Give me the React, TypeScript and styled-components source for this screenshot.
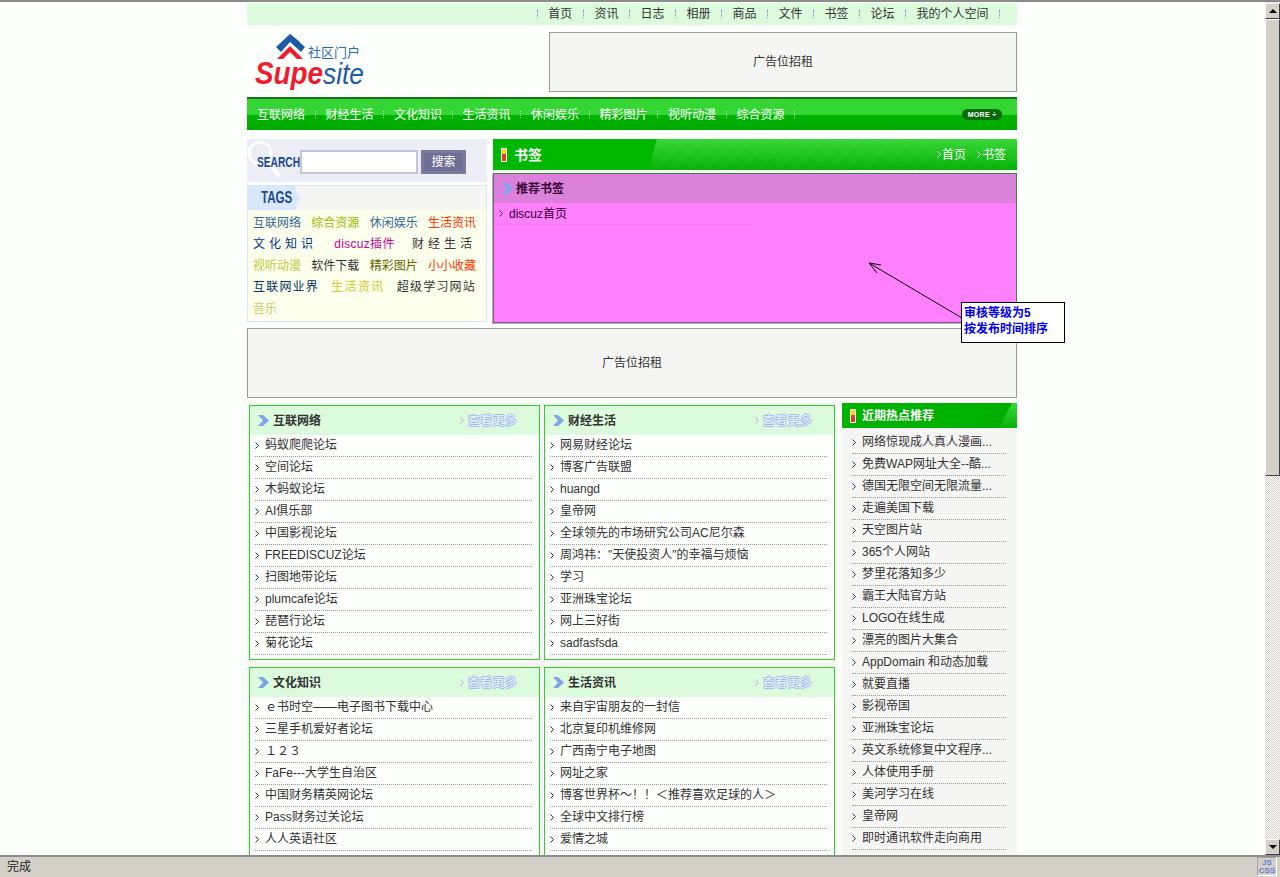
import React from "react";
import styled, { createGlobalStyle } from "styled-components";

const Global = createGlobalStyle`
  html, body { margin: 0; padding: 0; height: 100%; overflow: hidden; background: #fff; }
  #root { height: 100%; }
  * { box-sizing: border-box; }
  body { font: 12px/16px "Liberation Sans", "Noto Sans CJK SC", sans-serif; color: #333; }
`;

const Frame = styled.div`
  height: 877px; display: flex; flex-direction: column; background: #fdfffd;
`;
const Work = styled.div`
  height: 855px; display: flex; border-top: 2px solid #8c8c8c; overflow: hidden;
`;
const LeftEdge = styled.div`
  width: 2px; flex: none; background: #fdfffd;
`;
const Viewport = styled.div`
  width: 1263px; flex: none; padding: 1px 0 0 245px; overflow: hidden;
`;
const Page = styled.div`
  width: 770px;
`;

const TopBar = styled.div`
  height: 22px; background: #dcfadc; display: flex; justify-content: flex-end; align-items: center; padding-right: 17px;
`;
const TopItem = styled.span`
  color: #333; padding: 0 10.5px;
`;
const TopSep = styled.i`
  width: 1px; height: 8px; border-left: 1px dotted #6a8ccc; display: block;
`;

const Header = styled.div`
  height: 72px; display: flex; justify-content: space-between; padding: 7px 0 0 8px;
`;
const AdBox = styled.div<{ $w: string; $h: number }>`
  width: ${(p) => p.$w}; height: ${(p) => p.$h}px; background: #f5f6f4; border: 1px solid #999;
  display: flex; align-items: center; justify-content: center; color: #333;
`;
const LogoSvg = styled.svg`
  display: block; width: 110px; height: 56px; margin-top: 2px;
`;

const Nav = styled.div`
  height: 33px; border-top: 2px solid #1a701a; padding-left: 0;
  background: linear-gradient(#34d634 0, #34d634 16px, #00b400 16px, #00a900 31px);
  display: flex; align-items: center; position: relative;
`;
const NavItem = styled.span`
  color: #fff; padding: 0 9.5px 0 10px;
`;
const NavSep = styled.i`
  width: 1px; height: 7px; border-left: 1px dotted #d8f8d8; display: block;
`;
const MoreBadge = styled.span`
  margin-left: auto; margin-right: 15px; width: 40px; height: 11px; border-radius: 6px; background: #076c07;
  color: #fff; font: bold 7px/11px "Liberation Sans", sans-serif; text-align: center; letter-spacing: 0.3px;
`;

const MainRow = styled.div`
  display: flex; gap: 6px; margin-top: 9px;
`;
const Side = styled.div`
  width: 240px; display: flex; flex-direction: column; gap: 3px;
`;
const SearchBar = styled.div`
  height: 43px; background: #ecedf5; display: flex; align-items: center; padding: 3px 0 0 10px; position: relative; overflow: hidden;
`;
const Lens = styled.svg`
  position: absolute; left: 0; top: 0; width: 36px; height: 42px;
`;
const Slab = styled.span<{ $size: number; $w: number }>`
  position: relative; display: block; width: ${(p) => p.$w}px; color: #1c4a8e; font-weight: bold; font-size: ${(p) => p.$size}px;
  transform: scaleX(0.68); transform-origin: left center; white-space: nowrap;
`;
const SearchInput = styled.input`
  width: 118px; height: 24px; margin-left: 8px; border: 2px solid #c4c4de; background: #fff; padding: 0; outline: none;
`;
const SearchBtn = styled.button`
  width: 45px; height: 24px; margin-left: 3px; border: 3px solid #7a7a9c; background: #6f6f96; color: #fff; padding: 0;
  font: 12px/16px "Liberation Sans", "Noto Sans CJK SC", sans-serif;
`;
const TagsBox = styled.div`
  height: 137px; border: 1px solid #d8e6f8; background: #fbffec;
`;
const TagsHead = styled.div`
  height: 24px; background: #f5f6f4; display: flex;
`;
const TagsTab = styled.div`
  width: 48px; height: 24px; background: #d8e8fc; padding: 0 0 0 13px; display: flex; align-items: center;
`;
const TagsTip = styled.i`
  display: block; width: 0; height: 0; margin-top: 6px; border-left: 5px solid #d8e8fc; border-top: 6px solid transparent; border-bottom: 6px solid transparent;
`;
const TagsBody = styled.div`
  padding: 2px 10px 0 5px;
`;
const TagRow = styled.div<{ $start?: boolean }>`
  height: 21.5px; display: flex; align-items: center; justify-content: ${(p) => (p.$start ? "flex-start" : "space-between")}; white-space: nowrap;
`;
const Tag = styled.span<{ $c: string; $ls?: number }>`
  color: ${(p) => p.$c}; letter-spacing: ${(p) => p.$ls ?? 0}px;
`;

const Main = styled.div`
  width: 524px; display: flex; flex-direction: column; gap: 3px;
`;
const GreenHead = styled.div`
  height: 31px; display: flex; align-items: center; padding: 0 11px 0 8px; color: #fff;
  background:
    linear-gradient(105deg, #00b800 0, #00b800 158px, rgba(0,184,0,0) 158.5px),
    repeating-linear-gradient(-45deg, rgba(255,255,255,0.07) 0 1px, rgba(255,255,255,0) 1px 3px),
    linear-gradient(#35d635, #00b000);
`;
const Flag = styled.i`
  display: block; width: 6px; height: 14px; border: 1px solid #fff; flex: none;
  background: linear-gradient(#f4d820 0, #f4d820 40%, #e23a2a 40%);
`;
const HeadTitle = styled.span`
  font-weight: bold; font-size: 14px; margin-left: 7px;
`;
const HeadLinks = styled.div`
  margin-left: auto; display: flex; gap: 11px;
`;
const HeadLink = styled.span`
  color: #fff; display: flex; align-items: center; gap: 1px;
`;
const PinkBox = styled.div`
  height: 150px; background: #ff80ff; border: 1px solid #338c33; border-bottom-width: 1px; position: relative; box-shadow: -1px 1px 0 #ff80ff;
`;
const PinkHead = styled.div`
  height: 29px; background: #db80db; display: flex; align-items: center; padding-left: 8px;
`;
const PinkTitle = styled.b`
  color: #330033; margin-left: 3px;
`;
const PinkRow = styled.div`
  height: 22px; width: 262px; border-bottom: 1px solid #f57cf5; display: flex; align-items: center; padding-left: 5px; color: #300030; gap: 6px;
`;
const ArrowSvg = styled.svg`
  position: absolute; left: 373px; top: 88px; width: 96px; height: 60px;
`;
const Note = styled.div`
  position: absolute; left: 467px; top: 128px; width: 104px; height: 41px; background: #fff; border: 1px solid #000; z-index: 2;
  color: #0000f0; font-weight: bold; padding: 2px 2px; line-height: 16px; white-space: nowrap;
`;

const Grid = styled.div`
  display: flex; margin-top: 5px; align-items: flex-start;
`;
const LeftGrid = styled.div`
  width: 590px; padding: 2px; background: #f5f6f4; display: grid; grid-template-columns: 291px 291px; gap: 7px 4px;
`;
const Card = styled.div`
  border: 1px solid #33cc33; background: #fdfffd; min-height: 255px; padding-bottom: 4px;
`;
const CardHead = styled.div`
  height: 29px; background: #dcfadc; display: flex; align-items: center; padding: 0 22px 0 8px;
`;
const CardTitle = styled.b`
  color: #333; margin-left: 4px;
`;
const MoreLink = styled.span`
  margin-left: auto; display: flex; align-items: center; gap: 4px; color: #f0f6ff; letter-spacing: 0.3px;
  text-shadow: 1px 0 0 #96b8f4, -1px 0 0 #96b8f4, 0 1px 0 #96b8f4, 0 -1px 0 #96b8f4;
`;
const List = styled.ul<{ $pad?: number }>`
  list-style: none; margin: 0; padding: ${(p) => p.$pad ?? 0}px 0 0;
`;
const Row = styled.li<{ $side?: boolean }>`
  height: 22px; display: flex; align-items: center; gap: 6px; white-space: nowrap; color: #333;
  margin: ${(p) => (p.$side ? "0 11px 0 10px" : "0 7px 0 5px")};
  border-bottom: 1px dotted #999; padding-bottom: 1px;
`;
const RightCol = styled.div`
  width: 175px; margin-left: 5px; background: #f5f5f3; min-height: 460px;
`;
const SideHead = styled.div`
  height: 25px; display: flex; align-items: center; padding-left: 8px; color: #fff;
  background:
    linear-gradient(118deg, #00b400 0, #00b000 150px, rgba(0,176,0,0) 150.5px),
    repeating-linear-gradient(-45deg, rgba(255,255,255,0.07) 0 1px, rgba(255,255,255,0) 1px 3px),
    linear-gradient(#35d635, #00b000);
`;
const SideTitle = styled.b`
  margin-left: 6px;
`;

const Status = styled.div`
  height: 22px; background: #d4d0c8; border-top: 2px solid #8c8c8c; display: flex; align-items: center; padding: 0 3px 1px 7px; color: #222;
`;
const GripPanel = styled.div`
  margin-left: auto; width: 20px; height: 19px; border: 1px solid #fff; border-color: #a8a49c #fff #fff #a8a49c; display: flex; flex-direction: column; align-items: center; justify-content: center;
  font: bold 8px/8px "Liberation Sans", sans-serif; color: #5c84dc;
`;
const StatusText = styled.span`
  flex: 1; 
`;

const Scrollbar = styled.div`
  width: 15px; flex: none; display: flex; flex-direction: column; padding-top: 1px;
  background: repeating-conic-gradient(#d4d0c8 0 25%, #fff 0 50%) 0 0 / 2px 2px;
`;
const ScrollBtn = styled.div`
  height: 16px; flex: none; background: #d4d0c8; border: 1px solid; border-color: #fff #404040 #404040 #fff;
  display: flex; align-items: center; justify-content: center;
`;
const Thumb = styled.div`
  height: 457px; flex: none; background: #d4d0c8; border: 1px solid; border-color: #fff #404040 #404040 #fff;
`;
const Spacer = styled.div`
  flex: 1;
`;
const Tri = styled.i<{ $up?: boolean }>`
  display: block; width: 0; height: 0; border-left: 4px solid transparent; border-right: 4px solid transparent;
  ${(p) => (p.$up ? "border-bottom: 4px solid #000;" : "border-top: 4px solid #000;")}
`;

const Bullet = ({ c = "#333" }: { c?: string }) => (
  <svg width="4" height="7" viewBox="0 0 4 7" style={{ flex: "none" }}>
    <path d="M0.5 0.5 L3.5 3.5 L0.5 6.5" fill="none" stroke={c} strokeWidth="1" />
  </svg>
);
const Chevron = () => (
  <svg width="11" height="11" viewBox="0 0 11 11" style={{ flex: "none" }}>
    <polygon points="0,0 5,0 11,5.5 5,11 0,11 5,5.5" fill="#7fa4ea" />
  </svg>
);

const topNav = ["首页", "资讯", "日志", "相册", "商品", "文件", "书签", "论坛", "我的个人空间"];
const mainNav = ["互联网络", "财经生活", "文化知识", "生活资讯", "休闲娱乐", "精彩图片", "视听动漫", "综合资源"];

const tags: { t: string; c: string; ls?: number }[][] = [
  [{ t: "互联网络", c: "#336699" }, { t: "综合资源", c: "#99bb00" }, { t: "休闲娱乐", c: "#336699" }, { t: "生活资讯", c: "#ff3300" }],
  [{ t: "文化知识", c: "#003399", ls: 4 }, { t: "discuz插件", c: "#cc0099", ls: 0.3 }, { t: "财经生活", c: "#333333", ls: 4 }],
  [{ t: "视听动漫", c: "#c6c63a" }, { t: "软件下载", c: "#333333" }, { t: "精彩图片", c: "#666600" }, { t: "小小收藏", c: "#ff3300" }],
  [{ t: "互联网业界", c: "#003366", ls: 1.2 }, { t: "生活资讯", c: "#cccc33", ls: 1.3 }, { t: "超级学习网站", c: "#333333", ls: 1.2 }],
];

const cards: { title: string; items: string[] }[] = [
  { title: "互联网络", items: ["蚂蚁爬爬论坛", "空间论坛", "木蚂蚁论坛", "AI俱乐部", "中国影视论坛", "FREEDISCUZ论坛", "扫图地带论坛", "plumcafe论坛", "琵琶行论坛", "菊花论坛"] },
  { title: "财经生活", items: ["网易财经论坛", "博客广告联盟", "huangd", "皇帝网", "全球领先的市场研究公司AC尼尔森", "周鸿祎：\"天使投资人\"的幸福与烦恼", "学习", "亚洲珠宝论坛", "网上三好街", "sadfasfsda"] },
  { title: "文化知识", items: ["ｅ书时空——电子图书下载中心", "三星手机爱好者论坛", "１２３", "FaFe---大学生自治区", "中国财务精英网论坛", "Pass财务过关论坛", "人人英语社区"] },
  { title: "生活资讯", items: ["来自宇宙朋友的一封信", "北京复印机维修网", "广西南宁电子地图", "网址之家", "博客世界杯～！！＜推荐喜欢足球的人＞", "全球中文排行榜", "爱情之城"] },
];

const hot = ["网络惊现成人真人漫画...", "免费WAP网址大全--酷...", "德国无限空间无限流量...", "走遍美国下载", "天空图片站", "365个人网站", "梦里花落知多少", "霸王大陆官方站", "LOGO在线生成", "漂亮的图片大集合", "AppDomain 和动态加载", "就要直播", "影视帝国", "亚洲珠宝论坛", "英文系统修复中文程序...", "人体使用手册", "美河学习在线", "皇帝网", "即时通讯软件走向商用"];

export default function App() {
  return (
    <Frame>
      <Global />
      <Work>
        <LeftEdge />
        <Viewport>
          <Page>
            <TopBar>
              {topNav.map((t) => (
                <React.Fragment key={t}>
                  <TopSep />
                  <TopItem>{t}</TopItem>
                </React.Fragment>
              ))}
              <TopSep />
            </TopBar>
            <Header>
              <LogoSvg viewBox="0 0 110 56">
                <polygon points="35,0 21,13 26,18 35,8 44,8 46,9 35,0" fill="#1f5aa6" />
                <polygon points="35,0 50,13 46,18 34,7" fill="#1f5aa6" />
                <polygon points="22,25 35,12 48,25 42,25 35,18 28,25" fill="#ee1c2e" />
                <text x="53" y="23" fontSize="13" fill="#2a6db5" fontFamily="Noto Sans CJK SC, sans-serif">社区门户</text>
                <text x="0" y="50" fontSize="31" fontWeight="bold" fontStyle="italic" fill="#ee1c2e" fontFamily="Liberation Sans, sans-serif" textLength="68" lengthAdjust="spacingAndGlyphs">Supe</text>
                <text x="68" y="50" fontSize="29" fontStyle="italic" fill="#1f5aa6" fontFamily="Liberation Sans, sans-serif" textLength="41" lengthAdjust="spacingAndGlyphs">site</text>
              </LogoSvg>
              <AdBox $w="468px" $h={60}>广告位招租</AdBox>
            </Header>
            <Nav>
              {mainNav.map((t) => (
                <React.Fragment key={t}>
                  <NavItem>{t}</NavItem>
                  <NavSep />
                </React.Fragment>
              ))}
              <MoreBadge>MORE ÷</MoreBadge>
            </Nav>
            <MainRow>
              <Side>
                <SearchBar>
                  <Lens viewBox="0 0 36 42">
                    <circle cx="13" cy="14" r="11" fill="none" stroke="#fff" strokeWidth="3" />
                    <path d="M21 23 L32 37" stroke="#fff" strokeWidth="4" />
                  </Lens>
                  <Slab $size={15} $w={35}>SEARCH</Slab>
                  <SearchInput />
                  <SearchBtn>搜索</SearchBtn>
                </SearchBar>
                <TagsBox>
                  <TagsHead>
                    <TagsTab>
                      <Slab $size={17} $w={30}>TAGS</Slab>
                    </TagsTab>
                    <TagsTip />
                  </TagsHead>
                  <TagsBody>
                    {tags.map((r, i) => (
                      <TagRow key={i}>
                        {r.map((t) => (
                          <Tag key={t.t} $c={t.c} $ls={t.ls}>{t.t}</Tag>
                        ))}
                      </TagRow>
                    ))}
                    <TagRow $start>
                      <Tag $c="#cccc66">音乐</Tag>
                    </TagRow>
                  </TagsBody>
                </TagsBox>
              </Side>
              <Main>
                <GreenHead>
                  <Flag />
                  <HeadTitle>书签</HeadTitle>
                  <HeadLinks>
                    <HeadLink><Bullet c="#fff" />首页</HeadLink>
                    <HeadLink><Bullet c="#fff" />书签</HeadLink>
                  </HeadLinks>
                </GreenHead>
                <PinkBox>
                  <PinkHead>
                    <Chevron />
                    <PinkTitle>推荐书签</PinkTitle>
                  </PinkHead>
                  <PinkRow>
                    <Bullet />
                    discuz首页
                  </PinkRow>
                  <ArrowSvg viewBox="0 0 96 60">
                    <path d="M2 1 L95 56 M2 1 L14 3 M2 1 L10 11" fill="none" stroke="#000" strokeWidth="1" />
                  </ArrowSvg>
                  <Note>
                    审核等级为5
                    <br />
                    按发布时间排序
                  </Note>
                </PinkBox>
              </Main>
            </MainRow>
            <div style={{ height: 5 }} />
            <AdBox $w="770px" $h={70}>广告位招租</AdBox>
            <Grid>
              <LeftGrid>
                {cards.map((c) => (
                  <Card key={c.title}>
                    <CardHead>
                      <Chevron />
                      <CardTitle>{c.title}</CardTitle>
                      <MoreLink><Bullet c="#96b8f4" />查看更多</MoreLink>
                    </CardHead>
                    <List>
                      {c.items.map((t) => (
                        <Row key={t}><Bullet />{t}</Row>
                      ))}
                    </List>
                  </Card>
                ))}
              </LeftGrid>
              <RightCol>
                <SideHead>
                  <Flag />
                  <SideTitle>近期热点推荐</SideTitle>
                </SideHead>
                <List $pad={4}>
                  {hot.map((t) => (
                    <Row key={t} $side><Bullet />{t}</Row>
                  ))}
                </List>
              </RightCol>
            </Grid>
          </Page>
        </Viewport>
        <Scrollbar>
          <ScrollBtn><Tri $up /></ScrollBtn>
          <Thumb />
          <Spacer />
          <ScrollBtn><Tri /></ScrollBtn>
        </Scrollbar>
      </Work>
      <Status>
        <StatusText>完成</StatusText>
        <GripPanel><span>JS</span><span>CSS</span></GripPanel>
      </Status>
    </Frame>
  );
}
